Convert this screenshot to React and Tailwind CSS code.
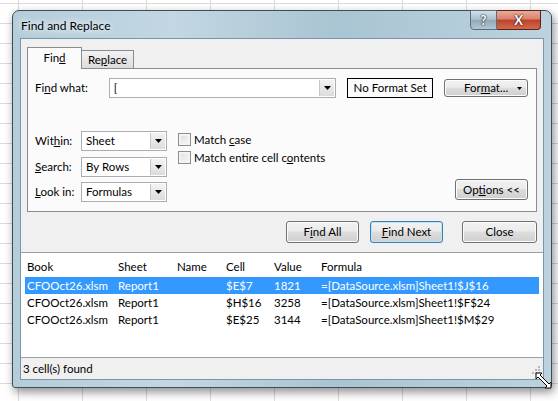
import React from 'react';

function Arrow() {
  return (
    <svg width="7" height="4" viewBox="0 0 7 4"><path d="M0 0h7L3.5 4z" fill="#000" /></svg>
  );
}

function DropBtn() {
  return (
    <div className="flex w-[15px] items-center justify-center self-stretch border-l border-[#c7c7c7] bg-[linear-gradient(#f3f3f3,#dcdcdc)]">
      <Arrow />
    </div>
  );
}

function Combo({ value, className }) {
  return (
    <div className={`flex h-[20px] items-stretch border border-[#abadb3] bg-white ${className}`}>
      <div className="flex flex-1 items-center pl-[4px]">{value}</div>
      <div className="m-px flex">
        <DropBtn />
      </div>
    </div>
  );
}

function Btn({ children, className = '', focused }) {
  return (
    <div
      className={`flex items-center justify-center rounded-[3px] border ${
        focused
          ? 'border-[#3c7fb1] shadow-[inset_0_0_0_1px_#bde4f9]'
          : 'border-[#707070] shadow-[inset_0_0_0_1px_#fcfcfc]'
      } bg-[linear-gradient(#f2f2f2_0%,#ebebeb_45%,#dddddd_50%,#cfcfcf_100%)] ${className}`}
    >
      {children}
    </div>
  );
}

function Check({ children }) {
  return (
    <div className="flex h-[13px] items-center gap-[3px]">
      <div className="h-[13px] w-[13px] border border-[#8e8f8f] bg-[linear-gradient(135deg,#dcdcdc,#fbfbfb)] shadow-[inset_0_0_0_2px_#f4f4f4]" />
      <span>{children}</span>
    </div>
  );
}

const rows = [
  ['CFOOct26.xlsm', 'Report1', '', '$E$7', '1821', '=[DataSource.xlsm]Sheet1!$J$16'],
  ['CFOOct26.xlsm', 'Report1', '', '$H$16', '3258', '=[DataSource.xlsm]Sheet1!$F$24'],
  ['CFOOct26.xlsm', 'Report1', '', '$E$25', '3144', '=[DataSource.xlsm]Sheet1!$M$29'],
];

function Row({ cells, selected }) {
  return (
    <div className={`flex h-[17px] items-center ${selected ? 'bg-[#3399ff] text-white' : ''}`}>
      <div className="w-[93px] pl-[2px]">{cells[0]}</div>
      <div className="w-[59px]">{cells[1]}</div>
      <div className="w-[49px]">{cells[2]}</div>
      <div className="w-[48px]">{cells[3]}</div>
      <div className="w-[47px]">{cells[4]}</div>
      <div className="flex-1">{cells[5]}</div>
    </div>
  );
}

export default function App() {
  return (
    <div className="relative h-[401px] w-[558px] overflow-hidden bg-white bg-[linear-gradient(to_right,#dadada_1px,transparent_1px),linear-gradient(to_bottom,#dadada_1px,transparent_1px)] bg-[size:64px_20px] bg-[position:18px_3px] font-['Lato','Segoe_UI',sans-serif] text-[11.5px] leading-none text-black">
      {/* dialog window */}
      <div className="absolute left-[12px] top-[10px] flex h-[378px] w-[540px] flex-col rounded-t-[7px] rounded-b-[3px] border border-[#3d4d58] bg-[linear-gradient(90deg,#b4cdda_0%,#c2d7e2_30%,#a9c4d2_60%,#bcd3df_100%)] shadow-[2px_4px_10px_rgba(0,0,0,0.45)]">
        {/* title bar */}
        <div className="relative flex h-[27px] shrink-0 items-center pl-[8px]">
          <span className="pt-[2px] text-[12px] [text-shadow:0_0_6px_#fff,0_0_10px_#fff]">Find and Replace</span>
          <div className="absolute right-[10px] top-[-1px] flex h-[20px]">
            <div className="flex w-[27px] items-center justify-center rounded-bl-[4px] border border-[#5a6f7c] bg-[linear-gradient(#d3e1e9,#a5bccb_50%,#8fa9b9_51%,#b2c7d3)] text-[13px] font-bold text-white [text-shadow:0_0_2px_#222,0_0_1px_#000]">
              ?
            </div>
            <div className="flex w-[44px] items-center justify-center rounded-br-[4px] border border-l-0 border-[#5b2318] bg-[linear-gradient(#e9a99a,#d9826c_45%,#c0402a_50%,#d16a4f_100%)] text-[13px] font-bold text-white [text-shadow:0_0_2px_#3a0a00,0_0_1px_#000]">
              X
            </div>
          </div>
        </div>

        {/* client area */}
        <div className="mx-[7px] mb-[7px] flex flex-1 flex-col border border-[#7b95a4] bg-[#f0f0f0]">
          {/* tabs */}
          <div className="flex h-[30px] items-end pl-[6px]">
            <div className="relative z-10 flex h-[22px] w-[55px] items-center justify-center border border-b-0 border-[#898c95] bg-[#fbfbfb] pb-[1px]">
              Fin<u>d</u>
            </div>
            <div className="flex h-[19px] w-[52px] items-center justify-center border border-b-0 border-l-0 border-[#898c95] bg-[linear-gradient(#f3f3f3,#dadada)]">
              Re<u>p</u>lace
            </div>
          </div>
          {/* tab panel */}
          <div className="mx-[6px] -mt-px flex h-[144px] flex-col border border-[#898c95] bg-[#fbfbfb] pl-[7px] pr-[8px] pt-[9px]">
            <div className="flex items-start">
              <div className="flex h-[20px] w-[74px] items-center">
                Fi<u>n</u>d what:
              </div>
              <Combo value="[" className="w-[228px]" />
              <div className="ml-[11px] flex h-[20px] w-[86px] items-center justify-center border border-black">
                No Format Set
              </div>
              <Btn className="relative ml-[11px] mt-px h-[18px] w-[84px]">
                <span>
                  For<u>m</u>at...
                </span>
                <span className="absolute right-[5px] top-[7px]">
                  <svg width="5" height="3" viewBox="0 0 5 3"><path d="M0 0h5L2.5 3z" fill="#000" /></svg>
                </span>
              </Btn>
            </div>
            <div className="mt-[33px] flex">
              <div className="flex flex-col">
                <div className="flex items-center">
                  <span className="w-[46px]">
                    Wit<u>h</u>in:
                  </span>
                  <Combo value="Sheet" className="w-[86px]" />
                </div>
                <div className="mt-[6px] flex items-center">
                  <span className="w-[46px]">
                    <u>S</u>earch:
                  </span>
                  <Combo value="By Rows" className="w-[86px]" />
                </div>
                <div className="mt-[5px] flex items-center">
                  <span className="w-[46px]">
                    <u>L</u>ook in:
                  </span>
                  <Combo value="Formulas" className="w-[86px]" />
                </div>
              </div>
              <div className="ml-[11px] mt-[2px] flex flex-col gap-[5px]">
                <Check>
                  Match <u>c</u>ase
                </Check>
                <Check>
                  Match entire cell c<u>o</u>ntents
                </Check>
              </div>
              <div className="flex-1" />
              <Btn className="mb-[2px] h-[21px] w-[73px] self-end">
                <span>
                  Op<u>t</u>ions &lt;&lt;
                </span>
              </Btn>
            </div>
          </div>

          {/* action buttons */}
          <div className="mt-[9px] flex justify-end pr-[6px]">
            <Btn className="h-[22px] w-[73px]">
              <span>
                F<u>i</u>nd All
              </span>
            </Btn>
            <Btn focused className="ml-[11px] h-[22px] w-[73px]">
              <span>
                <u>F</u>ind Next
              </span>
            </Btn>
            <Btn className="ml-[19px] h-[22px] w-[75px]">
              <span>Close</span>
            </Btn>
          </div>

          {/* results list */}
          <div className="mt-[9px] flex flex-1 flex-col border-t border-[#a0a0a0] bg-white px-[4px] pt-[5px]">
            <Row cells={['Book', 'Sheet', 'Name', 'Cell', 'Value', 'Formula']} />
            <div className="mt-[2px]" />
            {rows.map((r, i) => (
              <Row key={i} cells={r} selected={i === 0} />
            ))}
          </div>
          {/* status bar */}
          <div className="relative flex h-[22px] shrink-0 items-center border-t border-[#a0a0a0] bg-[#f0f0f0] pl-[2px]">
            3 cell(s) found
            <svg className="absolute bottom-[2px] right-[2px]" width="11" height="11" viewBox="0 0 11 11">
              <g fill="#b8b8b8">
                <rect x="8" y="0" width="2" height="2" />
                <rect x="5" y="3" width="2" height="2" />
                <rect x="8" y="3" width="2" height="2" />
                <rect x="2" y="6" width="2" height="2" />
                <rect x="5" y="6" width="2" height="2" />
                <rect x="8" y="6" width="2" height="2" />
              </g>
            </svg>
          </div>
        </div>
      </div>

      {/* resize cursor */}
      <svg className="absolute left-[535px] top-[372px]" width="17" height="17" viewBox="0 0 17 17">
        <path
          d="M1 1h6l-2 2 9 9 2-2v6h-6l2-2-9-9-2 2z"
          fill="#fff"
          stroke="#000"
          strokeWidth="1"
          strokeLinejoin="miter"
        />
      </svg>
    </div>
  );
}
